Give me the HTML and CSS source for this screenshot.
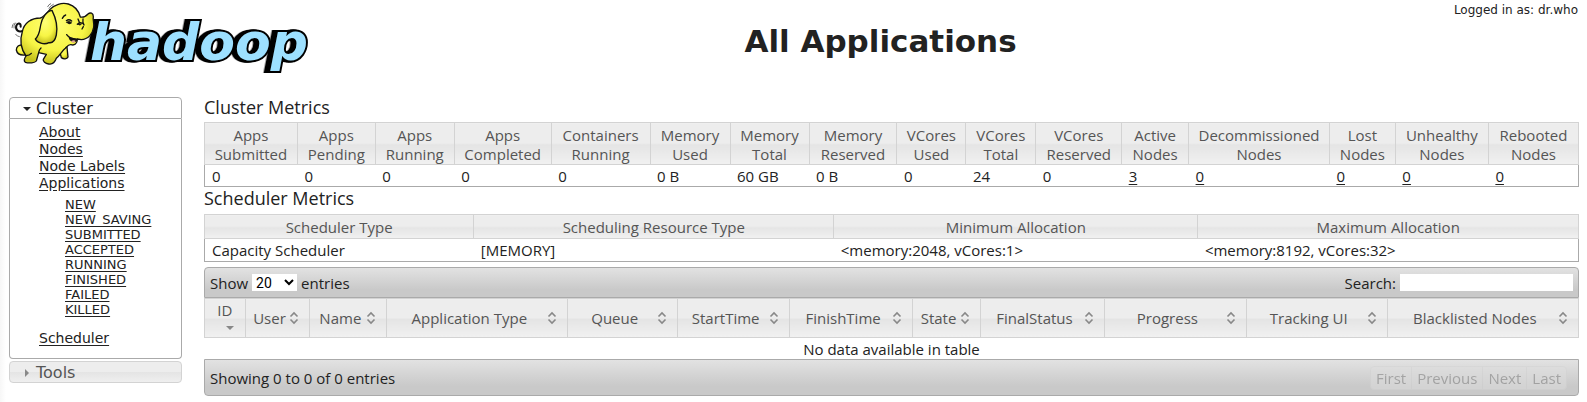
FILE: index.html
```html
<!DOCTYPE html>
<html lang="en">
<head>
<meta charset="utf-8">
<title>All Applications</title>
<link rel="stylesheet" href="styles.css">
</head>
<body>
<svg class="sprites" aria-hidden="true">
  <symbol id="sort" viewBox="0 0 16 16"><path d="M4.500 6.500 8 3l3.500 3.500M4.500 9.500 8 13l3.500-3.500" fill="none" stroke="#888" stroke-width="1.600"/></symbol>
  <symbol id="down" viewBox="0 0 16 16"><path d="M4 6h8l-4 4z" fill="currentColor"/></symbol>
  <symbol id="right" viewBox="0 0 16 16"><path d="M6 4v8l4-4z" fill="currentColor"/></symbol>
</svg>
<header class="header">
  <svg class="logo" viewBox="0 0 960 225" role="img" aria-label="Hadoop">
    <defs>
      <radialGradient id="skin" cx=".45" cy=".35" r=".65"><stop offset="0" stop-color="#ffff78"/><stop offset=".65" stop-color="#f7f545"/><stop offset="1" stop-color="#c4c01c"/></radialGradient>
    </defs>
    <text class="wordmark" x="270" y="180">hadoop</text>
    <g fill="url(#skin)" stroke="#111" stroke-width="4" stroke-linejoin="round" stroke-linecap="round">
      <path d="M70 92C56 99 45 90 49 77C53 67 63 69 62 80" fill="none" stroke-width="6"/>
      <path d="M68 136C57 133 49 140 49 150C51 160 61 166 74 165L85 145Z"/>
      <path d="M178 150L184 173C191 178 201 178 204 171L200 132Z"/>
      <path d="M150 28C163 14 185 7 205 12C225 18 236 32 241 51C251 53 258 49 264 42C271 36 280 39 280 50C278 60 283 68 281 82C278 102 264 118 244 119L232 117C232 132 223 137 213 134C205 133 201 140 196 145C186 153 181 165 169 175C164 189 156 194 146 192C136 190 128 184 130 178L139 163L116 158L109 183C105 189 88 190 76 187C71 183 74 174 78 168C63 147 59 120 67 95C72 69 94 54 121 54C131 52 139 41 150 28Z"/>
      <path d="M156 31C165 49 174 79 169 105C166 119 159 130 147 128C132 136 111 128 106 117C119 106 119 91 122 75C126 53 139 34 156 31Z"/>
      <path d="M208 113C210 124 223 130 232 119Z" fill="#111"/>
      <path d="M213 124Q221 118 227 123Q219 133 213 124Z" fill="#e8a89a" stroke="none"/>
      <path d="M200 104Q209 117 232 118M187 55Q191 47 197 45M199 62Q207 56 215 63M232 73Q240 65 246 70M234 57L238 67M249 57Q247 68 252 75M250 80L246 87M116 157Q118 148 123 144M78 167Q89 166 94 160" fill="none"/>
      <path d="M200 67Q207 76 215 69Q208 59 200 67ZM235 73Q240 78 244 73Q239 69 235 73Z" fill="#111" stroke-width="2"/>
      <path d="M143 20Q146 13 152 11M147 25Q151 17 160 13M36 83Q36 73 43 69M42 84Q40 75 46 69M47 103Q51 110 58 110" fill="none" stroke="#777" stroke-width="3"/>
    </g>
  </svg>
  <h1 class="title">All Applications</h1>
  <div class="user">Logged in as: dr.who</div>
</header>
<div class="layout">
  <nav class="nav">
    <h3 class="nav-head open"><svg class="icon"><use href="#down"/></svg>Cluster</h3>
    <div class="nav-body">
      <ul class="links">
        <li><a href="#">About</a></li>
        <li><a href="#">Nodes</a></li>
        <li><a href="#">Node Labels</a></li>
        <li><a href="#">Applications</a>
          <ul class="states">
            <li><a href="#">NEW</a></li>
            <li><a href="#">NEW_SAVING</a></li>
            <li><a href="#">SUBMITTED</a></li>
            <li><a href="#">ACCEPTED</a></li>
            <li><a href="#">RUNNING</a></li>
            <li><a href="#">FINISHED</a></li>
            <li><a href="#">FAILED</a></li>
            <li><a href="#">KILLED</a></li>
          </ul>
        </li>
        <li><a href="#">Scheduler</a></li>
      </ul>
    </div>
    <h3 class="nav-head closed"><svg class="icon"><use href="#right"/></svg>Tools</h3>
  </nav>
  <main class="content">
    <h2 class="section">Cluster Metrics</h2>
    <table class="grid cluster">
      <colgroup><col class="a1"><col class="a2"><col class="a3"><col class="a4"><col class="a5"><col class="a6"><col class="a7"><col class="a8"><col class="a9"><col class="a10"><col class="a11"><col class="a12"><col class="a13"><col class="a14"><col class="a15"><col class="a16"></colgroup>
      <thead><tr><th>Apps<br>Submitted</th><th>Apps<br>Pending</th><th>Apps<br>Running</th><th>Apps<br>Completed</th><th>Containers<br>Running</th><th>Memory<br>Used</th><th>Memory<br>Total</th><th>Memory<br>Reserved</th><th>VCores<br>Used</th><th>VCores<br>Total</th><th>VCores<br>Reserved</th><th>Active<br>Nodes</th><th>Decommissioned<br>Nodes</th><th>Lost<br>Nodes</th><th>Unhealthy<br>Nodes</th><th>Rebooted<br>Nodes</th></tr></thead>
      <tbody><tr><td>0</td><td>0</td><td>0</td><td>0</td><td>0</td><td>0 B</td><td>60 GB</td><td>0 B</td><td>0</td><td>24</td><td>0</td><td><a href="#">3</a></td><td><a href="#">0</a></td><td><a href="#">0</a></td><td><a href="#">0</a></td><td><a href="#">0</a></td></tr></tbody>
    </table>
    <h2 class="section">Scheduler Metrics</h2>
    <table class="grid">
      <colgroup><col class="b1"><col class="b2"><col class="b3"><col class="b4"></colgroup>
      <thead><tr><th>Scheduler Type</th><th>Scheduling Resource Type</th><th>Minimum Allocation</th><th>Maximum Allocation</th></tr></thead>
      <tbody><tr><td>Capacity Scheduler</td><td>[MEMORY]</td><td>&lt;memory:2048, vCores:1&gt;</td><td>&lt;memory:8192, vCores:32&gt;</td></tr></tbody>
    </table>
    <div class="bar top">
      <label>Show <select class="length"><option>20</option></select> entries</label>
      <label class="search">Search: <input class="field" type="text"></label>
    </div>
    <table class="grid apps">
      <colgroup><col class="c1"><col class="c2"><col class="c3"><col class="c4"><col class="c5"><col class="c6"><col class="c7"><col class="c8"><col class="c9"><col class="c10"><col class="c11"><col class="c12"></colgroup>
      <thead><tr>
        <th><div class="sorter stacked"><span>ID</span><svg class="icon"><use href="#down"/></svg></div></th>
        <th><div class="sorter"><span>User</span><svg class="icon"><use href="#sort"/></svg></div></th>
        <th><div class="sorter"><span>Name</span><svg class="icon"><use href="#sort"/></svg></div></th>
        <th><div class="sorter"><span>Application Type</span><svg class="icon"><use href="#sort"/></svg></div></th>
        <th><div class="sorter"><span>Queue</span><svg class="icon"><use href="#sort"/></svg></div></th>
        <th><div class="sorter"><span>StartTime</span><svg class="icon"><use href="#sort"/></svg></div></th>
        <th><div class="sorter"><span>FinishTime</span><svg class="icon"><use href="#sort"/></svg></div></th>
        <th><div class="sorter"><span>State</span><svg class="icon"><use href="#sort"/></svg></div></th>
        <th><div class="sorter"><span>FinalStatus</span><svg class="icon"><use href="#sort"/></svg></div></th>
        <th><div class="sorter"><span>Progress</span><svg class="icon"><use href="#sort"/></svg></div></th>
        <th><div class="sorter"><span>Tracking UI</span><svg class="icon"><use href="#sort"/></svg></div></th>
        <th><div class="sorter"><span>Blacklisted Nodes</span><svg class="icon"><use href="#sort"/></svg></div></th>
      </tr></thead>
      <tbody><tr><td class="empty" colspan="12">No data available in table</td></tr></tbody>
    </table>
    <div class="bar bottom">
      <div>Showing 0 to 0 of 0 entries</div>
      <div class="pager"><button disabled>First</button><button disabled>Previous</button><button disabled>Next</button><button disabled>Last</button></div>
    </div>
  </main>
</div>
</body>
</html>
```
FILE: styles.css
```css
* { box-sizing: border-box; }
body {
  margin: 0;
  background: linear-gradient(90deg, #f7f7f7, #fff 6px);
  color: #222;
  font: 15px/20px "Open Sans", "Noto Sans", sans-serif;
}
a { color: #222; text-underline-offset: 2px; }
ul { margin: 0; padding: 0; list-style: none; }
.sprites { display: none; }
.icon { width: 16px; height: 16px; flex: none; }

.header {
  display: grid;
  grid-template-columns: 320px 1fr 146px;
  height: 97px;
  font-family: "DejaVu Sans", sans-serif;
}
.logo { width: 320px; height: 75px; }
.wordmark {
  font: italic bold 156px "DejaVu Sans", sans-serif;
  fill: #9de0ff;
  stroke: #000;
  stroke-width: 12px;
  paint-order: stroke;
  filter: drop-shadow(-6px 0 0 #000) drop-shadow(-7px 0 0 #000);
}
.title {
  margin: 0;
  padding: 21px 0 0;
  text-align: center;
  font-size: 31px;
  line-height: 40px;
}
.user {
  padding: 1px 9px 0 0;
  text-align: right;
  font-size: 12px;
  line-height: 18px;
  white-space: nowrap;
}

.layout {
  display: grid;
  grid-template-columns: 173px minmax(0, 1fr);
  gap: 22px;
  align-items: start;
  padding: 0 8px 0 9px;
}
.nav { font-family: "DejaVu Sans", sans-serif; }
.nav-head {
  display: flex;
  align-items: center;
  gap: 1px;
  margin: 0;
  padding: 1px 0 0 9px;
  height: 22px;
  border: 1px solid #aaa;
  font-size: 16px;
  font-weight: 400;
}
.nav-head.open { border-radius: 4px 4px 0 0; color: #222; }
.nav-head.closed {
  margin-top: 2px;
  border-color: #d3d3d3;
  border-radius: 4px;
  background: linear-gradient(#ededed 50%, #e4e4e4 51%, #efefef);
  color: #555;
}
.nav-head.closed .icon { color: #888; }
.nav-body {
  padding: 5px 0 11px 29px;
  border: 1px solid #aaa;
  border-top: 0;
  border-radius: 0 0 4px 4px;
}
.links { font-size: 14px; line-height: 17px; }
.states {
  padding: 5px 0 13px 26px;
  font-size: 13px;
  line-height: 15px;
}

.section {
  margin: 0;
  padding-bottom: 5px;
  font-size: 18px;
  font-weight: 400;
  line-height: 20px;
}
.grid + .section { padding: 1px 0 6px; }
.grid {
  width: 100%;
  table-layout: fixed;
  border-collapse: collapse;
  border: 1px solid #aaa;
  background: #fff;
}
.grid th {
  padding: 3px 0 1px;
  border: 1px solid #d3d3d3;
  background: linear-gradient(#ededed 49%, #e4e4e4 51%, #f1f1f1);
  color: #555;
  font-weight: 400;
  line-height: 19px;
  white-space: nowrap;
}
.grid td { padding: 1px 7px; line-height: 20px; }
.grid.cluster th { padding-bottom: 0; }
.grid.cluster td { padding-bottom: 0; }
.grid td.empty { padding: 2px 0 0; text-align: center; line-height: 19px; }
.grid.apps { border: 0; }
.grid.apps th { height: 39px; padding: 0 7px; }
.sorter { display: flex; align-items: center; }
.sorter span { flex: 1; text-align: center; }
.sorter.stacked { flex-direction: column; }
.sorter.stacked span { line-height: 20px; }
.sorter.stacked .icon { align-self: flex-end; color: #888; }

.a1 { width: 6.76%; } .a2 { width: 5.67%; } .a3 { width: 5.75%; } .a4 { width: 7.05%; }
.a5 { width: 7.2%; } .a6 { width: 5.82%; } .a7 { width: 5.75%; } .a8 { width: 6.4%; }
.a9 { width: 5.02%; } .a10 { width: 5.09%; } .a11 { width: 6.25%; } .a12 { width: 4.87%; }
.a13 { width: 10.25%; } .a14 { width: 4.8%; } .a15 { width: 6.77%; } .a16 { width: 6.55%; }
.b1 { width: 19.6%; } .b2 { width: 26.2%; } .b3 { width: 26.5%; } .b4 { width: 27.7%; }
.c1 { width: 2.95%; } .c2 { width: 4.72%; } .c3 { width: 5.6%; } .c4 { width: 13.17%; }
.c5 { width: 8%; } .c6 { width: 8.15%; } .c7 { width: 8.95%; } .c8 { width: 4.94%; }
.c9 { width: 9.02%; } .c10 { width: 10.33%; } .c11 { width: 10.25%; } .c12 { width: 13.92%; }

.bar {
  display: flex;
  align-items: center;
  justify-content: space-between;
  padding: 0 5px;
  border: 1px solid #aaa;
  background: linear-gradient(#e2e2e2, #c9c9c9 75%);
}
.bar.top { margin-top: 5px; height: 31px; border-radius: 4px 4px 0 0; }
.bar.bottom { height: 37px; padding-right: 12px; border-radius: 0 0 4px 4px; }
.bar label { display: flex; align-items: center; gap: 4px; }
.length, .field {
  height: 17px;
  border: 0;
  background: #fff;
  font: 14px Roboto, sans-serif;
}
.length { width: 45px; padding: 0; color: #000; }
.field { width: 173px; padding: 0 2px; }
.pager { display: flex; opacity: .5; }
.pager button {
  padding: 0 5px;
  height: 24px;
  border: 1px solid #d3d3d3;
  margin-right: -1px;
  background: #dedede;
  color: #777;
  font: inherit;
}
.pager button:first-child { border-radius: 4px 0 0 4px; }
.pager button:last-child { border-radius: 0 4px 4px 0; }
```
